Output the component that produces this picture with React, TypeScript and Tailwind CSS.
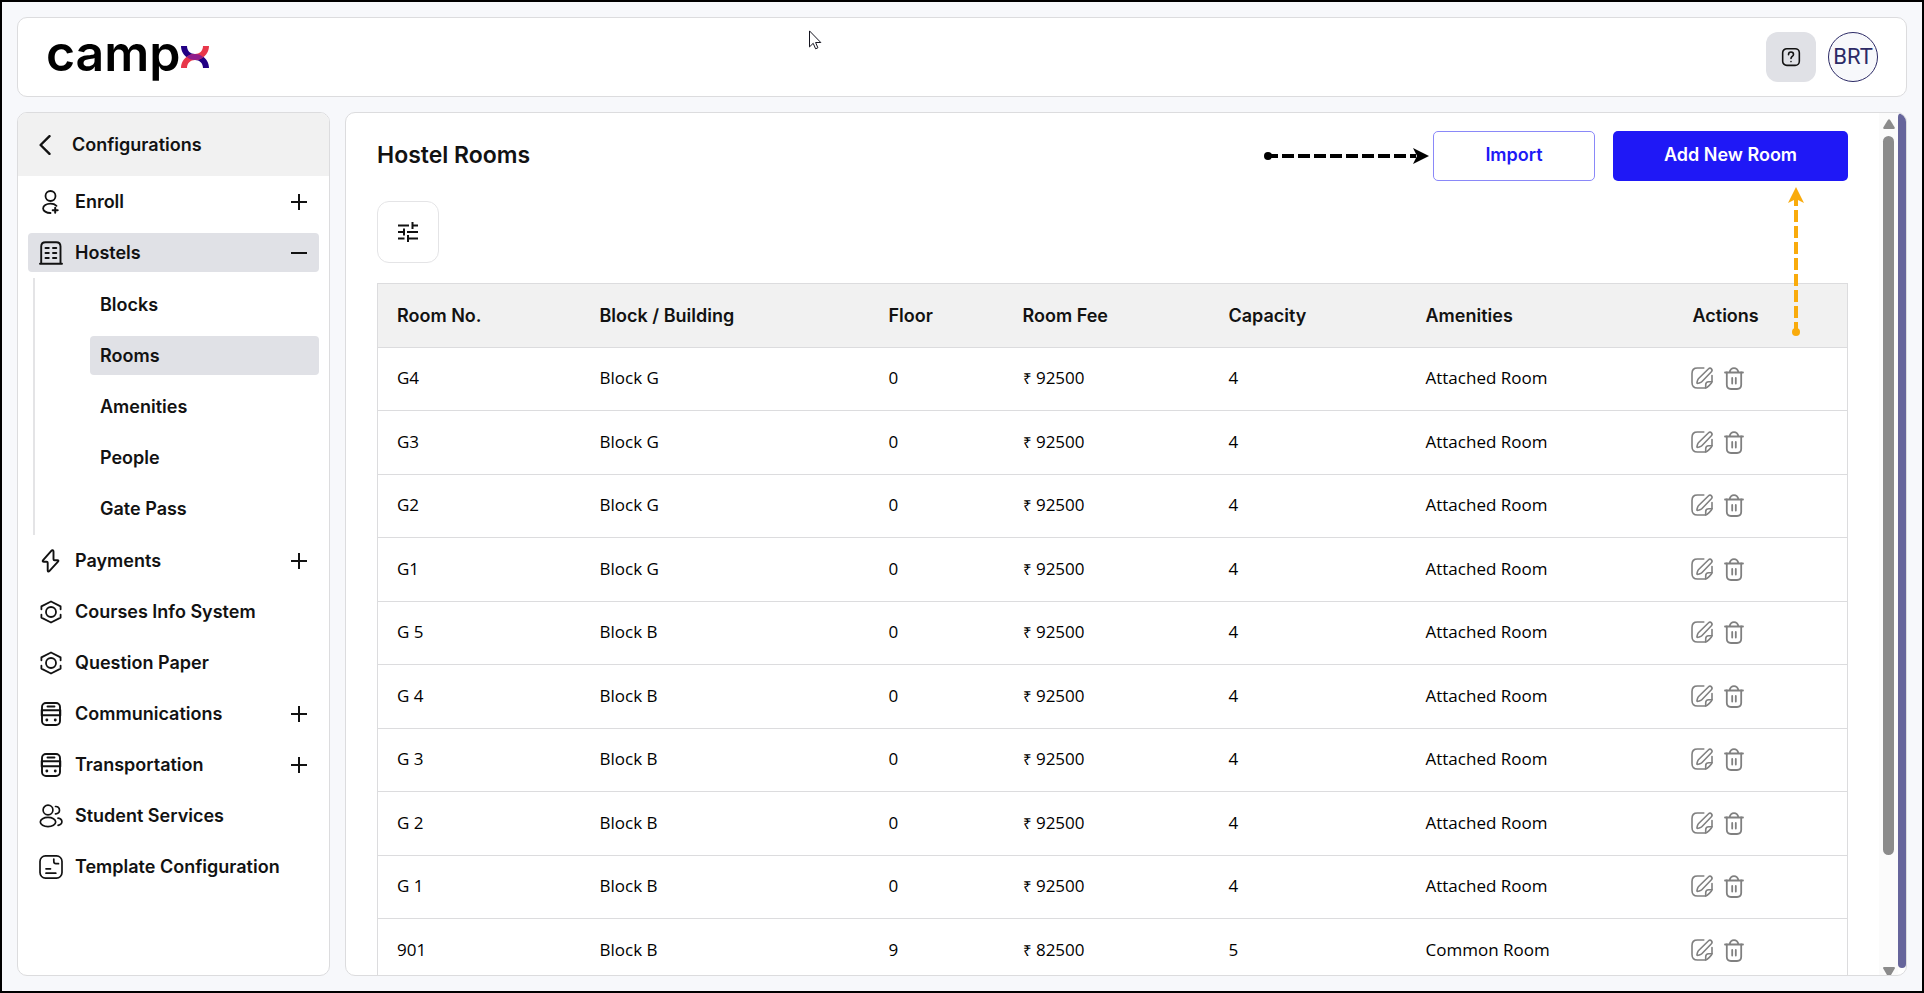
import { ReactNode } from "react";

type IconProps = { className?: string };

type NavItem = {
  label: string;
  icon: (props: IconProps) => ReactNode;
  expandable?: boolean;
  active?: boolean;
  children?: { label: string; active?: boolean }[];
};

const navItems: NavItem[] = [
  { label: "Enroll", icon: EnrollIcon, expandable: true },
  {
    label: "Hostels",
    icon: BuildingIcon,
    expandable: true,
    active: true,
    children: [
      { label: "Blocks" },
      { label: "Rooms", active: true },
      { label: "Amenities" },
      { label: "People" },
      { label: "Gate Pass" },
    ],
  },
  { label: "Payments", icon: BoltIcon, expandable: true },
  { label: "Courses Info System", icon: HexagonIcon },
  { label: "Question Paper", icon: HexagonIcon },
  { label: "Communications", icon: BusIcon, expandable: true },
  { label: "Transportation", icon: BusIcon, expandable: true },
  { label: "Student Services", icon: UsersIcon },
  { label: "Template Configuration", icon: TemplateIcon },
];

const rooms = [
  { no: "G4", block: "Block G", floor: 0, fee: 92500, capacity: 4, amenities: "Attached Room" },
  { no: "G3", block: "Block G", floor: 0, fee: 92500, capacity: 4, amenities: "Attached Room" },
  { no: "G2", block: "Block G", floor: 0, fee: 92500, capacity: 4, amenities: "Attached Room" },
  { no: "G1", block: "Block G", floor: 0, fee: 92500, capacity: 4, amenities: "Attached Room" },
  { no: "G 5", block: "Block B", floor: 0, fee: 92500, capacity: 4, amenities: "Attached Room" },
  { no: "G 4", block: "Block B", floor: 0, fee: 92500, capacity: 4, amenities: "Attached Room" },
  { no: "G 3", block: "Block B", floor: 0, fee: 92500, capacity: 4, amenities: "Attached Room" },
  { no: "G 2", block: "Block B", floor: 0, fee: 92500, capacity: 4, amenities: "Attached Room" },
  { no: "G 1", block: "Block B", floor: 0, fee: 92500, capacity: 4, amenities: "Attached Room" },
  { no: "901", block: "Block B", floor: 9, fee: 82500, capacity: 5, amenities: "Common Room" },
];

const columns = [
  { label: "Room No.", width: "w-[203px]" },
  { label: "Block / Building", width: "" },
  { label: "Floor", width: "w-[134px]" },
  { label: "Room Fee", width: "w-[206px]" },
  { label: "Capacity", width: "w-[197px]" },
  { label: "Amenities", width: "w-[267px]" },
  { label: "Actions", width: "w-[174px]" },
];

export default function App() {
  return (
    <div className="flex h-screen flex-col gap-[15px] border-2 border-black bg-[#f7f8fb] p-[15px] font-['Inter',sans-serif] text-[#121212]">
      <Header />
      <div className="flex min-h-0 flex-1 gap-[15px]">
        <Sidebar />
        <HostelRooms />
      </div>
    </div>
  );
}

function Header() {
  return (
    <header className="relative flex h-20 shrink-0 items-center justify-between rounded-[10px] border border-[#dcdcde] bg-white pr-7 pl-7">
      <a href="#" aria-label="campx" className="flex items-center text-black">
        <span className="-mt-2 text-[50px] leading-none font-semibold">camp</span>
        <svg className="h-[22px] w-7" viewBox="0 0 28 22" fill="none" aria-hidden="true">
          <path d="M0 0h6c0 5 3.500 8 8 8 3 0 5.500.800 7.500 2.300C25.500 13 28 17 28 22h-6c0-5-3.500-8-8-8-3 0-5.500-.800-7.500-2.300C2.500 9 0 5 0 0Z" fill="#210084" />
          <path d="M28 0h-6c0 5-3.500 8-8 8-3 0-5.500.800-7.500 2.300C2.500 13 0 17 0 22h6c0-5 3.500-8 8-8 3 0 5.500-.800 7.500-2.300C25.500 9 28 5 28 0Z" fill="#e8374a" />
          <path d="M6.300 10.500C8.500 8.800 11 8 14 8s5.500.800 7.700 2.500v1C19.500 13.200 17 14 14 14s-5.500-.800-7.700-2.500Z" fill="#8f1d8c" />
        </svg>
      </a>

      <div className="flex items-center gap-3">
        <button
          aria-label="Help"
          className="flex size-[50px] items-center justify-center rounded-xl bg-[#e0e1e6]"
        >
          <HelpIcon className="size-5" />
        </button>
        <button className="flex size-[50px] items-center justify-center rounded-full border border-[#2c2a66] bg-[#f7f8fb] pb-[2px] font-['Roboto',sans-serif] text-[22px] text-[#2c2a66]">
          BRT
        </button>
      </div>

      {/* Mouse pointer */}
      <svg
        className="absolute top-3 left-[791px] h-5 w-[13px]"
        viewBox="0 0 13 20"
        fill="white"
        stroke="#14141f"
        aria-hidden="true"
      >
        <path d="M.5.900v16l3.700-3.600 2.400 5.500 2.300-1-2.300-5.300h5.200Z" />
      </svg>
    </header>
  );
}

function Sidebar() {
  return (
    <aside className="flex w-[313px] shrink-0 flex-col overflow-hidden rounded-[10px] border border-[#dcdcde] bg-white text-lg font-semibold">
      <div className="flex h-[63px] shrink-0 items-center gap-5 bg-[#f1f1f1] pl-5">
        <button aria-label="Back" className="flex w-[14px] justify-center">
          <svg className="h-5 w-3" viewBox="0 0 12 20" fill="none" stroke="currentColor" strokeWidth="2.400" strokeLinecap="round" strokeLinejoin="round">
            <path d="M10.500 1.200 1.600 10l8.900 8.800" />
          </svg>
        </button>
        <h2>Configurations</h2>
      </div>

      <nav aria-label="Configurations">
        <ul className="px-[10px]">
          {navItems.map((item) => (
            <li key={item.label}>
              <NavRow item={item} />
              {item.children && (
                <ul className="ml-[5px] border-l-2 border-[#e4e4e6] py-px pl-[55px]">
                  {item.children.map((child) => (
                    <li key={child.label} className="py-[6px]">
                      <a
                        href="#"
                        className={`flex h-[39px] items-center rounded px-[10px] ${
                          child.active ? "bg-[#e0e1e6]" : ""
                        }`}
                      >
                        {child.label}
                      </a>
                    </li>
                  ))}
                </ul>
              )}
            </li>
          ))}
        </ul>
      </nav>
    </aside>
  );
}

function NavRow({ item }: { item: NavItem }) {
  const Icon = item.icon;
  return (
    <div className="py-[6px]">
      <a
        href="#"
        className={`flex h-[39px] items-center gap-3 rounded pr-3 pl-[11px] ${
          item.active ? "bg-[#e0e1e6]" : ""
        }`}
      >
        <Icon className="size-6 shrink-0" />
        <span className="flex-1 whitespace-nowrap">{item.label}</span>
        {item.expandable && (
          <svg className="size-4 shrink-0" viewBox="0 0 16 16" stroke="currentColor" strokeWidth="2" aria-hidden="true">
            <path d={item.active ? "M0 8h16" : "M0 8h16M8 0v16"} />
          </svg>
        )}
      </a>
    </div>
  );
}

function HostelRooms() {
  return (
    <main className="flex min-w-0 flex-1 overflow-hidden rounded-[10px] border border-[#dcdcde] bg-white">
      <div className="min-w-0 flex-1 overflow-hidden px-[31px] pt-[18px]">
        <div className="flex h-[50px] items-center justify-between">
          <h1 className="pb-[2px] text-[23px] leading-none font-semibold">Hostel Rooms</h1>
          <div className="flex items-center text-lg font-semibold">
            <svg className="mr-1 h-4 w-[165px]" viewBox="0 0 165 16" aria-hidden="true">
              <circle cx="4" cy="8" r="4" />
              <path d="M4 8h148" stroke="black" strokeWidth="4" strokeDasharray="12 4" strokeDashoffset="2" />
              <path d="m149 0 16 8-16 8 4-8Z" />
            </svg>
            <button className="h-[50px] w-[162px] rounded-[5px] border border-[#8a88f8] pb-[2px] text-[#2019f6]">
              Import
            </button>
            <div className="relative ml-[18px]">
              <button className="h-[50px] w-[235px] rounded-[5px] bg-[#1f18f6] pb-[2px] text-white">
                Add New Room
              </button>
              <svg
                className="absolute top-full right-11 mt-[6px] h-[149px] w-4"
                viewBox="0 0 16 149"
                fill="#f9ab0c"
                aria-hidden="true"
              >
                <circle cx="8" cy="145" r="4" />
                <path d="M8 145V12" stroke="#f9ab0c" strokeWidth="4" strokeDasharray="12 4" strokeDashoffset="2" />
                <path d="m8 0 8 16-8-4-8 4Z" />
              </svg>
            </div>
          </div>
        </div>

        <button
          aria-label="Filters"
          className="mt-5 flex size-[62px] items-center justify-center rounded-xl border border-[#e4e4e6]"
        >
          <svg className="size-5" viewBox="0 0 20 20" stroke="currentColor" strokeWidth="2" aria-hidden="true">
            <path d="M0 3.500h11M14.500 0v7M14.500 3.500H20M0 10h6M6 6.500v7M9 10h11M0 16.500h6.500M10 13v7M10 16.500h10" />
          </svg>
        </button>

        <table className="mt-5 w-full table-fixed border-collapse border border-[#dcdcde] text-left">
          <colgroup>
            {columns.map((column) => (
              <col key={column.label} className={column.width} />
            ))}
          </colgroup>
          <thead>
            <tr className="h-16 bg-[#f1f1f1] text-lg">
              {columns.map((column) => (
                <th key={column.label} scope="col" className="pl-[19px] font-semibold">
                  {column.label}
                </th>
              ))}
            </tr>
          </thead>
          <tbody className="font-['Open_Sans',sans-serif] text-[17px] text-black">
            {rooms.map((room) => (
              <tr key={room.no} className="border-t border-[#dcdcde] odd:h-[63px] even:h-16 [&>td]:pb-[2px]">
                <td className="pl-[19px]">{room.no}</td>
                <td className="pl-[19px]">{room.block}</td>
                <td className="pl-[19px]">{room.floor}</td>
                <td className="pl-[19px]">
                  <span className="text-[15px]">₹</span> {room.fee}
                </td>
                <td className="pl-[19px]">{room.capacity}</td>
                <td className="pl-[19px]">{room.amenities}</td>
                <td className="pl-4">
                  <div className="flex gap-2 text-[#808080]">
                    <button aria-label={`Edit room ${room.no}`}>
                      <EditIcon className="size-6" />
                    </button>
                    <button aria-label={`Delete room ${room.no}`}>
                      <TrashIcon className="size-6" />
                    </button>
                  </div>
                </td>
              </tr>
            ))}
          </tbody>
        </table>
      </div>

      {/* Scroll bars */}
      <div className="flex w-[19px] flex-col items-center bg-[#fbfbfb] pt-[6px]" aria-hidden="true">
        <svg className="mb-[7px] h-[10px] w-3 shrink-0" viewBox="0 0 12 10" fill="#8b8b8b">
          <path d="M5 .800q1-1.200 2 0l4.600 7.400q.600 1.800-.800 1.800H1.200Q-.200 10 .400 8.200Z" />
        </svg>
        <div className="h-[84%] w-[11px] rounded-full bg-[#8b8b8b]" />
        <svg className="mt-auto h-2 w-3 shrink-0" viewBox="0 0 12 8" fill="#8b8b8b">
          <path d="M.800 0h10.400q1.200.600.600 1.600L8 8H4L.200 1.600Q-.400.600.800 0Z" />
        </svg>
      </div>
      <div className="mb-[7px] w-2 rounded-full bg-[#66659b]" aria-hidden="true" />
    </main>
  );
}

function Icon({ className, children, width = 1.6 }: IconProps & { children: ReactNode; width?: number }) {
  return (
    <svg
      className={className}
      viewBox="0 0 24 24"
      fill="none"
      stroke="currentColor"
      strokeWidth={width}
      strokeLinecap="round"
      strokeLinejoin="round"
      aria-hidden="true"
    >
      {children}
    </svg>
  );
}

function EnrollIcon({ className }: IconProps) {
  return (
    <Icon className={className} width={1.8}>
      <circle cx="11.500" cy="6" r="5" />
      <path d="M17.500 15.800c-1.300-1.300-3.500-2.100-6-2.100-4.100 0-7.400 2.100-7.400 4.700 0 2.500 3.300 4.600 7.400 4.600" />
      <path d="M16.200 17.700v5M13.700 20.200h5" strokeWidth="2" />
    </Icon>
  );
}

function BuildingIcon({ className }: IconProps) {
  return (
    <Icon className={className} width={1.9}>
      <path d="M1 22.800h22M2.200 22.800V5.500C2.200 2.500 3.500 1.200 6.500 1.200h10.700c3 0 4.300 1.300 4.300 4.300v17.300" />
      <path d="M6.500 7h3.300M6.500 12h3.300M6.500 17h3.300M14 7h3.300M14 12h3.300M14 17h3.300" />
    </Icon>
  );
}

function BoltIcon({ className }: IconProps) {
  return (
    <Icon className={className} width={1.9}>
      <path d="M12.300 1.800 4.100 11.200c-.8 1-.5 1.600.8 1.600h2.800c.7 0 1 .3 1 1v7.700c0 1.200.9 1.500 1.600.7l8.700-9.500c.7-.8.5-1.500-.6-1.500h-2.900c-.7 0-1-.3-1-1V2.400c0-1.300-1.400-1.500-2.200-.6Z" />
    </Icon>
  );
}

function HexagonIcon({ className }: IconProps) {
  return (
    <Icon className={className} width={1.8}>
      <circle cx="12" cy="12" r="5" />
      <path d="M2.400 9.300V6.400L12 1.500l9.600 4.900v2.900M2.400 14.700v2.900l9.600 4.900 9.600-4.900v-2.900" />
    </Icon>
  );
}

function BusIcon({ className }: IconProps) {
  return (
    <Icon className={className} width={1.9}>
      <rect x="3" y="1" width="18" height="22" rx="4" />
      <path d="M8.500 4.500h7M3 8.200h18M3 13.200h18M2.700 8v5.500M21.300 8v5.500" />
      <path d="M7.800 18h.1M16.200 18h.1" strokeWidth="2.800" />
    </Icon>
  );
}

function UsersIcon({ className }: IconProps) {
  return (
    <Icon className={className} width={1.700}>
      <circle cx="9" cy="6" r="4.900" />
      <ellipse cx="9" cy="18" rx="7.700" ry="4.600" />
      <path d="M16.500 2.500c2.300-.2 4 1.400 4 3.700s-1.700 3.900-4 3.700M19 14.200c2.300.4 3.900 1.700 3.900 3.500s-1.500 3.100-3.800 3.600" />
    </Icon>
  );
}

function TemplateIcon({ className }: IconProps) {
  return (
    <Icon className={className} width={1.7}>
      <rect x="1" y=".9" width="22" height="22.200" rx="5.500" />
      <path d="M14.800 4v2.500c0 1.500.7 2.200 2.200 2.200h2.500M7 13.800h4.500M7 18.200h9.800" />
    </Icon>
  );
}

function HelpIcon({ className }: IconProps) {
  return (
    <Icon className={className} width={1.9}>
      <rect x="2" y="2" width="20" height="20" rx="5" />
      <path d="M9 9.200C9 7.300 10.300 6 12 6s3 1.200 3 2.900c0 2.300-3 2.600-3 4.800M12 17.300v.2" />
    </Icon>
  );
}

function EditIcon({ className }: IconProps) {
  return (
    <Icon className={className} width={1.600}>
      <path d="M13.800 2H7.500C3.500 2 2 3.500 2 7.500v9c0 4 1.500 5.500 5.500 5.500h8.200c1.300 0 6.300-5 6.300-6.300V9.500" />
      <path d="M15.700 22v-3.300c0-2.200.8-3 3-3H22" />
      <path d="m18.600 2.700-10 9.800c-.8.800-2 4.400-1.600 4.800s4-.8 4.800-1.600l9.600-9.900c1.800-1.900-.9-5-2.800-3.100Z" />
    </Icon>
  );
}

function TrashIcon({ className }: IconProps) {
  return (
    <Icon className={className} width={1.8}>
      <path d="M3 6.500h18M7.500 6.300C8.200 3.600 9.500 2.200 12 2.200s3.800 1.400 4.500 4.100" />
      <path d="M4.800 6.500v12.300c0 3 1.200 4.200 4.200 4.200h6c3 0 4.200-1.200 4.200-4.200V6.500M10.200 12v5.500M13.800 12v5.500" />
    </Icon>
  );
}
